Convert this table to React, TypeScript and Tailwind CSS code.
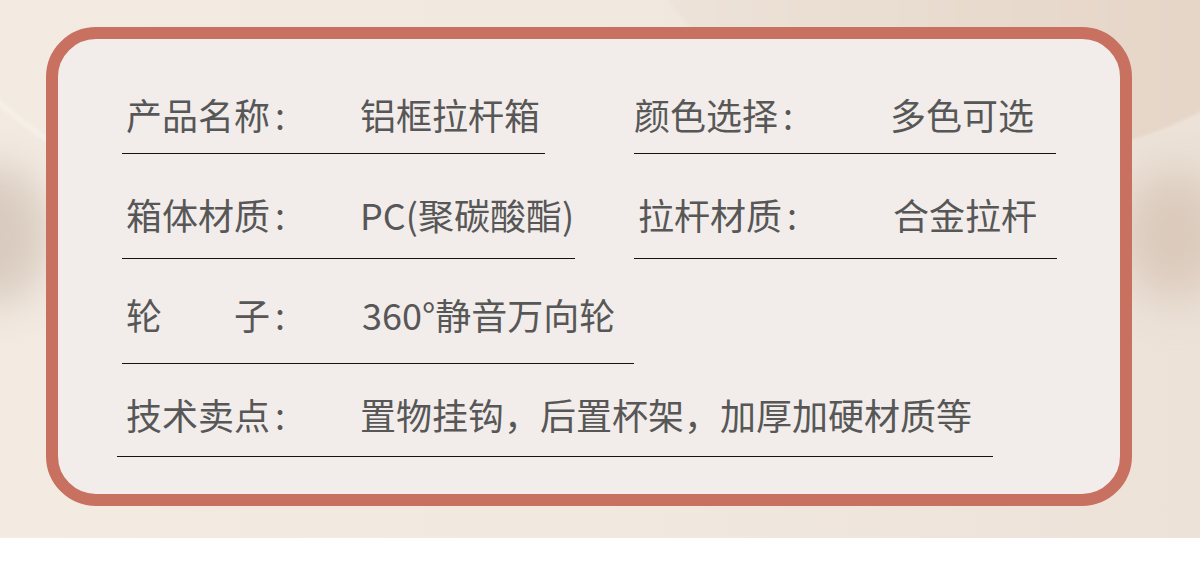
const font = { fontFamily: '"Noto Sans CJK SC", "Noto Sans", sans-serif' }

type Cell = {
  label: string
  value: string
  labelPad: string
  labelWidth: string
  lineMl: string
  lineWidth: string
}

type Row = {
  top: string
  lineGap: string
  left: Cell
  right?: Cell
}

const rows: Row[] = [
  {
    top: 'mt-[57px]',
    lineGap: 'mt-[21px]',
    left: { label: '产品名称', value: '铝框拉杆箱', labelPad: 'pl-[9px]', labelWidth: 'w-[234px]', lineMl: 'ml-[5px]', lineWidth: 'w-[423px]' },
    right: { label: '颜色选择', value: '多色可选', labelPad: 'pl-0', labelWidth: 'w-[256px]', lineMl: 'ml-0', lineWidth: 'w-[422px]' },
  },
  {
    top: 'mt-[42px]',
    lineGap: 'mt-[26px]',
    left: { label: '箱体材质', value: 'PC(聚碳酸酯)', labelPad: 'pl-[9px]', labelWidth: 'w-[234px]', lineMl: 'ml-[5px]', lineWidth: 'w-[453px]' },
    right: { label: '拉杆材质', value: '合金拉杆', labelPad: 'pl-[4px]', labelWidth: 'w-[255px]', lineMl: 'ml-0', lineWidth: 'w-[423px]' },
  },
  {
    top: 'mt-[37px]',
    lineGap: 'mt-[31px]',
    left: { label: '轮　　子', value: '360°静音万向轮', labelPad: 'pl-[9px]', labelWidth: 'w-[236px]', lineMl: 'ml-[5px]', lineWidth: 'w-[512px]' },
  },
  {
    top: 'mt-[32px]',
    lineGap: 'mt-[24px]',
    left: { label: '技术卖点', value: '置物挂钩，后置杯架，加厚加硬材质等', labelPad: 'pl-[9px]', labelWidth: 'w-[234px]', lineMl: 'ml-0', lineWidth: 'w-[876px]' },
  },
]

const SpecCell = ({ cell, lineGap, wide }: { cell: Cell; lineGap: string; wide?: boolean }) => (
  <div className={`flex flex-col ${wide ? 'w-[517px]' : ''}`}>
    <div className={`flex ${cell.labelPad} text-[36px] leading-[36px] text-[#575757] whitespace-nowrap`}>
      <span className={`${cell.labelWidth} shrink-0`}>
        {cell.label}
        <span className="ml-[5px]">:</span>
      </span>
      <span>{cell.value}</span>
    </div>
    <div className={`${lineGap} ${cell.lineMl} ${cell.lineWidth} h-px bg-[#141414]`} />
  </div>
)

export default function App() {
  return (
    <div className="w-[1200px] h-[566px] bg-white" style={font}>
      <div className="relative h-[538px] overflow-hidden bg-gradient-to-r from-[#f3ebe2] via-[#f1e8e0] to-[#ece2d8]">
        {/* soft decorative shapes behind the card */}
        <div className="absolute left-[-60px] top-[-270px] w-[1120px] h-[518px] rounded-[50%] border-[4px] border-[#f8f3ed] blur-[2px]" />
        <div className="absolute left-[600px] top-[-560px] w-[800px] h-[720px] rounded-[50%] bg-gradient-to-r from-[#efe5dc] via-[#e8dacd] to-[#e3d2c3] blur-[1px]" />
        <div className="absolute left-[1120px] top-[170px] w-[110px] h-[130px] rounded-[50%] bg-[#dbcabc] blur-[22px]" />
        <div className="absolute left-[-60px] top-[165px] w-[110px] h-[140px] rounded-[50%] bg-[#d8cabe] blur-[22px]" />

        <div className="relative pt-[27px] pl-[46px]">
          <div className="w-[1086px] h-[479px] rounded-[50px] border-[12px] border-[#c87161] bg-[#f2edea]">
            <div className="flex flex-col pl-[59px]">
              {rows.map((row, i) => (
                <div key={i} className={`flex ${row.top}`}>
                  <SpecCell cell={row.left} lineGap={row.lineGap} wide={!!row.right} />
                  {row.right && <SpecCell cell={row.right} lineGap={row.lineGap} />}
                </div>
              ))}
            </div>
          </div>
        </div>
      </div>
    </div>
  )
}
